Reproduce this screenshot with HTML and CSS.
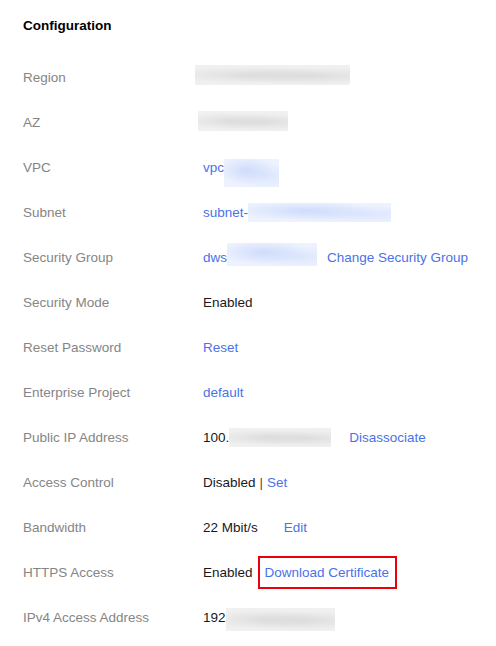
FILE: index.html
```html
<!DOCTYPE html>
<html>
<head>
<meta charset="utf-8">
<link rel="stylesheet" href="styles.css">
</head>
<body>
<div class="panel">
  <div class="title">Configuration</div>
  <div class="rows">
    <div class="row"><div class="label">Region</div><div class="value"><span class="blob gray b-region"></span></div></div>
    <div class="row"><div class="label">AZ</div><div class="value"><span class="blob gray b-az"></span></div></div>
    <div class="row"><div class="label">VPC</div><div class="value"><span class="link">vpc</span><span class="blob blue b-vpc"></span></div></div>
    <div class="row"><div class="label">Subnet</div><div class="value"><span class="link">subnet-</span><span class="blob blue b-subnet"></span></div></div>
    <div class="row"><div class="label">Security Group</div><div class="value"><span class="link">dws</span><span class="blob blue b-dws"></span><span class="link sg">Change Security Group</span></div></div>
    <div class="row"><div class="label">Security Mode</div><div class="value">Enabled</div></div>
    <div class="row"><div class="label">Reset Password</div><div class="value"><span class="link">Reset</span></div></div>
    <div class="row"><div class="label">Enterprise Project</div><div class="value"><span class="link">default</span></div></div>
    <div class="row"><div class="label">Public IP Address</div><div class="value"><span>100.</span><span class="blob gray b-ip"></span><span class="link dis">Disassociate</span></div></div>
    <div class="row"><div class="label">Access Control</div><div class="value"><span>Disabled</span><span class="sep">|</span><span class="link">Set</span></div></div>
    <div class="row"><div class="label">Bandwidth</div><div class="value"><span>22 Mbit/s</span><span class="link edit">Edit</span></div></div>
    <div class="row"><div class="label">HTTPS Access</div><div class="value"><span>Enabled</span><span class="highlight"><span class="link">Download Certificate</span></span></div></div>
    <div class="row"><div class="label">IPv4 Access Address</div><div class="value"><span>192</span><span class="blob gray b-v4"></span></div></div>
  </div>
</div>
</body>
</html>
```

FILE: styles.css
```css
html, body {
  margin: 0;
  padding: 0;
  background: #ffffff;
}
body {
  font-family: "Liberation Sans", Arial, sans-serif;
  font-size: 13.5px;
  color: #191919;
}
.panel {
  padding: 16px 0 0 23px;
}
.title {
  font-weight: bold;
  line-height: 20px;
  height: 20px;
  margin-bottom: 19px;
  color: #000;
}
.row {
  display: flex;
  align-items: center;
  height: 45px;
}
.label {
  width: 180px;
  flex: none;
  color: #858585;
  white-space: nowrap;
}
.value {
  display: flex;
  align-items: center;
  white-space: nowrap;
  color: #191919;
}
.link {
  color: #4a72e8;
}
.sg { margin-left: 10px; }
.dis { margin-left: 18px; }
.edit { margin-left: 26px; }
.sep {
  margin: 0 4px;
  color: #5a4a2a;
}
.highlight {
  display: inline-flex;
  align-items: center;
  box-sizing: border-box;
  height: 33px;
  margin-left: 5px;
  padding: 0 6px 0 5px;
  border: 2px solid #e8000b;
}
.blob {
  display: inline-block;
  flex: none;
}
.gray {
  background:
    radial-gradient(ellipse at 35% 50%, rgba(215,215,215,0.7), rgba(215,215,215,0) 60%),
    radial-gradient(ellipse at 75% 55%, rgba(210,210,210,0.6), rgba(210,210,210,0) 55%),
    #f0f0f0;
}
.blue {
  background:
    radial-gradient(ellipse at 40% 40%, rgba(200,215,250,0.8), rgba(200,215,250,0) 60%),
    radial-gradient(ellipse at 80% 60%, rgba(210,222,252,0.6), rgba(210,222,252,0) 55%),
    #edf2fe;
}
.b-region { width: 155px; height: 20px; margin-left: -8px; margin-bottom: 5px; }
.b-az { width: 90px; height: 20px; margin-left: -5px; margin-bottom: 3px; }
.b-vpc { width: 55px; height: 28px; margin-top: 11px; }
.b-subnet { width: 143px; height: 19px; }
.b-dws { width: 90px; height: 23px; margin-bottom: 6px; }
.b-ip { width: 102px; height: 19px; }
.b-v4 { width: 109px; height: 23px; margin-top: 4px; }
```
